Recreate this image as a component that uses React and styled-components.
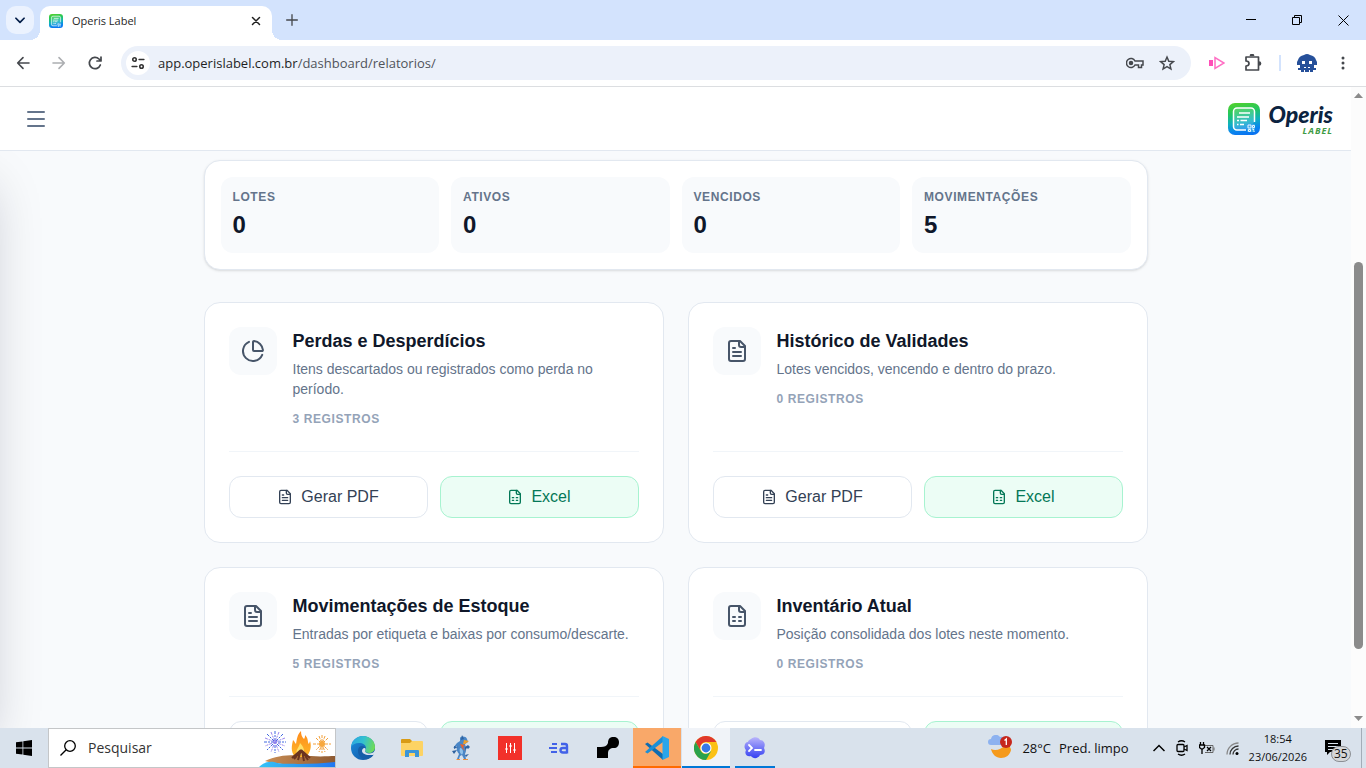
import React, { useState } from "react";
import styled, { createGlobalStyle, css } from "styled-components";
import { Menu } from "lucide-react";

const GlobalStyle = createGlobalStyle`
  * {
    box-sizing: border-box;
  }
  body {
    margin: 0;
    overflow: hidden;
    background: #f8fafc;
    font-family: "Liberation Sans", Arial, sans-serif;
  }
  button, input {
    font-family: inherit;
  }
  h1, h2, p, dl, dt, dd {
    margin: 0;
  }
`;

const stats = [
  { label: "Lotes", value: 0 },
  { label: "Ativos", value: 0 },
  { label: "Vencidos", value: 0 },
  { label: "Movimentações", value: 5 },
];

const reports = [
  {
    title: "Perdas e Desperdícios",
    text: "Itens descartados ou registrados como perda no período.",
    count: 3,
    icon: "pie",
  },
  {
    title: "Histórico de Validades",
    text: "Lotes vencidos, vencendo e dentro do prazo.",
    count: 0,
    icon: "doc",
  },
  {
    title: "Movimentações de Estoque",
    text: "Entradas por etiqueta e baixas por consumo/descarte.",
    count: 5,
    icon: "doc",
  },
  {
    title: "Inventário Atual",
    text: "Posição consolidada dos lotes neste momento.",
    count: 0,
    icon: "sheet",
  },
];

/* ---------- icons ---------- */

const Line = ({ size = 24, width = 2, children }) => (
  <svg
    width={size}
    height={size}
    viewBox="0 0 24 24"
    fill="none"
    stroke="currentColor"
    strokeWidth={width}
    strokeLinecap="round"
    strokeLinejoin="round"
    aria-hidden="true"
  >
    {children}
  </svg>
);

const FileIcon = ({ size, sheet }) => (
  <Line size={size}>
    <path d="M15 2H6a2 2 0 0 0-2 2v16a2 2 0 0 0 2 2h12a2 2 0 0 0 2-2V7Z" />
    <path d="M14 2v4a2 2 0 0 0 2 2h4" />
    {sheet ? (
      <path d="M8 13h2M14 13h2M8 17h2M14 17h2" />
    ) : (
      <path d="M10 9H8M16 13H8M16 17H8" />
    )}
  </Line>
);

const PieIcon = () => (
  <Line>
    <path d="M21 12c.55 0 1-.45.95-1a10 10 0 0 0-8.95-8.95c-.55-.05-1 .4-1 .95v8a1 1 0 0 0 1 1z" />
    <path d="M21.21 15.89A10 10 0 1 1 8 2.83" />
  </Line>
);

const AppMark = ({ size }) => (
  <svg width={size} height={size} viewBox="0 0 32 32" aria-hidden="true">
    <defs>
      <linearGradient id="mark" x1="0.3" y1="0" x2="0.5" y2="1">
        <stop offset="0" stopColor="#4fd02f" />
        <stop offset="0.3" stopColor="#22c662" />
        <stop offset="0.6" stopColor="#0fb0c0" />
        <stop offset="0.85" stopColor="#0a84ee" />
        <stop offset="1" stopColor="#0a74f0" />
      </linearGradient>
    </defs>
    <rect width="32" height="32" rx="7" fill="url(#mark)" />
    <path
      d="M18 27H9a3.500 3.500 0 0 1-3.500-3.500V8.500A3.500 3.500 0 0 1 9 5h14a3.500 3.500 0 0 1 3.500 3.500V19"
      fill="#ffffff2b"
      stroke="#fff"
      strokeWidth="1.500"
    />
    <path d="M11 10h11M9 14h12M9 17.500h2M12.500 17.500H19M9 21.500h1.500M12 21.500h4" stroke="#fff" strokeWidth="1.500" />
    <rect x="19" y="21" width="8" height="8" rx="1" fill="#3ba6ea" />
    <path d="M20 22h3v3h-3zM24.500 22.500h2v2h-2zM20.500 26.500h2v2h-2zM24 26h1.500v1.500M26.500 28.500h-1" fill="none" stroke="#e6f6ff" strokeWidth="1" />
  </svg>
);

const WindowsIcon = () => (
  <svg width="16" height="16" viewBox="0 0 16 16" aria-hidden="true">
    <path d="M0 2.300 6.500 1.400v6.200H0zM7.300 1.300 16 0v7.600H7.300zM0 8.400h6.500v6.200L0 13.700zM7.300 8.400H16V16l-8.700-1.300z" />
  </svg>
);

const CampfireIcon = () => (
  <svg width="76" height="38" viewBox="0 0 76 38" aria-hidden="true">
    <defs>
      <linearGradient id="sea" x1="0" x2="1">
        <stop offset="0" stopColor="#35c3f6" />
        <stop offset="1" stopColor="#2277f2" />
      </linearGradient>
      <linearGradient id="sand" x1="0" x2="1">
        <stop offset="0" stopColor="#c98d54" />
        <stop offset="1" stopColor="#8e5a32" />
      </linearGradient>
      <linearGradient id="fire" x1="0" y1="0" x2="0" y2="1">
        <stop offset="0" stopColor="#ff8a1c" />
        <stop offset="1" stopColor="#fdb827" />
      </linearGradient>
    </defs>
    <path d="M6 32c14-7 30-6 46-5 10 1 18 0 24 0v8c-20 3-50 2-70-3z" fill="url(#sand)" />
    <path d="M0 38c4-4 9-6 15-5 10 3 14 1 24 2 14 0 26-1 37-2v5z" fill="url(#sea)" />
    <g stroke="#4068e0" strokeWidth="1" strokeDasharray="3 1 2 1">
      <path d="M16 2v22M5 13h22M8 5l16 16M24 5 8 21" />
      <path d="M12 3l8 20M20 3l-8 20M6 9l20 8M26 9 6 17" stroke="#9a86ee" />
    </g>
    <g stroke="#f3a03a" strokeWidth="1" strokeDasharray="3 1">
      <path d="M63 6v18M54 15h18M57 9l12 12M69 9 57 21M60 7l6 16M66 7l-6 16" />
    </g>
    <circle cx="63" cy="15" r="3" fill="#f7a83f" />
    <path
      d="M36 28c-5-6-3-12-2-17 2 2 2 3 3 4 1-5 1-9 5-13 0 4 1 6 3 8 1-1 1-3 1-4 4 4 2 7 4 9 0-1 1-2 1-3 2 6 0 12-4 16z"
      fill="url(#fire)"
    />
    <path d="M38 26c-2-5 2-7 3-12 3 3 5 7 4 12z" fill="#ffe067" />
    <path d="M33 29l9-8M35 30l7-8M39 31l3-10M51 29l-9-8M49 31l-6-9M45 32l-2-10" stroke="#6b3420" strokeWidth="2" />
  </svg>
);

const EdgeIcon = () => (
  <svg width="24" height="24" viewBox="0 0 24 24" aria-hidden="true">
    <defs>
      <linearGradient id="edgeTop" x1="0" x2="1" y1="0.300" y2="0.500">
        <stop offset="0" stopColor="#2ba6e0" />
        <stop offset="0.500" stopColor="#34c1cf" />
        <stop offset="1" stopColor="#6fdc55" />
      </linearGradient>
      <linearGradient id="edgeLow" x1="0" x2="1" y1="0" y2="1">
        <stop offset="0" stopColor="#1b8fe0" />
        <stop offset="1" stopColor="#124f9c" />
      </linearGradient>
    </defs>
    <circle cx="12" cy="12" r="12" fill="url(#edgeLow)" />
    <path d="M0 11C1 4 6 0 12 0c7 0 12 5 12 11 0 4-3 6-6 6-2 0-4-1-4-2 0-.7 1-1 1-3 0-3-3-5-7-5-4 0-7 2-8 4z" fill="url(#edgeTop)" />
    <path d="M14 15c-1 0-1-1 0-2 0-2-1-3-3-3-3 0-4 3-4 5 0 5 5 9 10 8 3-1 5-3 6-5-4 2-9 0-9-3z" fill="#155ea8" />
    <path d="M14 15c0 1.500 2 2.500 4 2.500 3 0 5-1 6-3v3c-1 2-3 1.500-6 1.500-4 0-7-2-7-4 0-1.500 1-3 2.500-3 1 0 1.500 1 .5 3z" fill="#d9e2ec" />
  </svg>
);

const FolderIcon = () => (
  <svg width="22" height="20" viewBox="0 0 22 20" aria-hidden="true">
    <path d="M0 2a1 1 0 0 1 1-1h8l2 2v5H0z" fill="#d99b15" />
    <path d="M0 5h9l2-2h10a1 1 0 0 1 1 1v13a1 1 0 0 1-1 1H1a1 1 0 0 1-1-1z" fill="#fdd364" />
    <path d="M4 19v-6a1 1 0 0 1 1-1h12a1 1 0 0 1 1 1v6h-4v-4H8v4z" fill="#3b95d8" />
  </svg>
);

const MascotIcon = () => (
  <svg width="20" height="26" viewBox="0 0 20 26" aria-hidden="true">
    <path d="M9 3c1-2 6-2 7 1l1 3-3 2c1 3 2 6 0 10l1 5h-2l-2-4-2 1-1 3H6l2-5c-2-2-3-5-2-8l-4 2 4-5 3-2z" fill="#4a86c6" />
    <path d="M11 0l2 4-3 1zM1 16l5-1-3 4zM3 11l4 1-4 2zM14 20l4-1-3 3z" fill="#2e62a0" />
    <path d="M13 5l5 1-4 3h-2z" fill="#f0a02a" />
    <path d="M9 9l5 1-2 2 2 4-3-3z" fill="#e8632c" />
    <path d="M6 24h3v1H5zM12 24h5v1h-5z" fill="#f0913a" />
    <path d="M9 13c2 0 3 2 3 4s-1 3-2 2-2-4-1-6z" fill="#8fc1ea" />
    <path d="M14 12l3-2 2 2-2 2-1-1-2 2z" fill="#2e62a0" />
  </svg>
);

const MixerIcon = () => (
  <svg width="24" height="24" viewBox="0 0 24 24" aria-hidden="true">
    <rect width="24" height="24" fill="#f2312a" />
    <path d="M8.500 7v10M12.500 7v10M16.500 7v10" stroke="#fff" />
    <path d="M7.500 13h2M11.500 10h2M15.500 14h2" stroke="#fff" strokeWidth="2" />
  </svg>
);

const SpeedIcon = () => (
  <svg width="20" height="14" viewBox="0 0 20 14" fill="none" stroke="#4262e8" aria-hidden="true">
    <path d="M3 3h5M0 7h8M2 11h6" strokeWidth="2" />
    <path d="M12 3h4q2 0 2 2v7.500M18 7h-4q-2.500 0-2.500 2.200T14 11.500h4" strokeWidth="2.400" />
  </svg>
);

const JointIcon = () => (
  <svg width="22" height="22" viewBox="0 0 22 22" aria-hidden="true">
    <path d="M0 10h4c3 0 6-1 7-4C11 2 13 0 16 0a5 5 0 0 1 6 5c0 4-2 6-5 6-4 0-6 2-6 5v5H0z" />
  </svg>
);

const CodeIcon = () => (
  <svg width="24" height="24" viewBox="0 0 24 24" aria-hidden="true">
    <path d="M0 8l2.500-1.500L18 18v6z" fill="#0f6cb0" />
    <path d="M0 16l2.500 1.500L18 6V0z" fill="#1c8fd6" />
    <path d="M17.500 0l6.500 3v18l-6.500 3z" fill="#2aa5ea" />
  </svg>
);

const ChromeIcon = () => (
  <svg width="24" height="24" viewBox="0 0 24 24" aria-hidden="true">
    <circle cx="12" cy="12" r="12" fill="#fbc116" />
    <path d="M1.600 6A12 12 0 0 1 22.400 6H12a6 6 0 0 0-5.200 9z" fill="#e0382c" />
    <path d="M1.600 6l5.200 9A6 6 0 0 0 12 18l5.200-3L12 24A12 12 0 0 1 1.600 6z" fill="#2ba24c" />
    <circle cx="12" cy="12" r="5.500" fill="#fff" />
    <circle cx="12" cy="12" r="4.400" fill="#3778e6" />
  </svg>
);

const ShellIcon = () => (
  <svg width="22" height="22" viewBox="0 0 22 22" aria-hidden="true">
    <defs>
      <linearGradient id="shell" x1="0" y1="0" x2="0" y2="1">
        <stop offset="0" stopColor="#b9b4fb" />
        <stop offset="1" stopColor="#3440f2" />
      </linearGradient>
    </defs>
    <g fill="url(#shell)">
      <path d="M7 2c3-3 8-2 9 1 4 0 6 4 4 8 2 4 0 7-4 7-2 4-7 4-9 1-4 1-7-2-5-6-3-3-1-8 2-8 0-1 1-2 3-3z" />
    </g>
    <path d="M5 8l3 3-3 3M11 13h6" fill="none" stroke="#fff" strokeWidth="1.800" strokeLinecap="round" />
  </svg>
);

const WeatherIcon = () => (
  <svg width="26" height="26" viewBox="0 0 26 26" aria-hidden="true">
    <path d="M3 14c4 2 10 1 14-4 3 0 6 2 6 5-1 5-5 8-10 8s-9-4-10-9z" fill="#f59a1c" />
    <path d="M3 10a3 3 0 0 1 0-6 5 5 0 0 1 9-2 4 4 0 0 1 3 8z" fill="#8db2f0" />
    <circle cx="18" cy="7" r="6" fill="#c6271c" />
    <path d="M16.500 5.500 18.300 4v6" fill="none" stroke="#fff" strokeWidth="1.300" />
  </svg>
);

const ProfileIcon = () => (
  <svg width="20" height="18" viewBox="0 0 20 18" aria-hidden="true">
    <path d="M7 1q3-2 6 0 5 1 6 5l1 2v3h-3v3h2v2h-3v2h-3v-2h-1v2h-4v-2H7v2H4v-2H1v-2h2v-3H0V8l1-2q1-4 6-5z" fill="#26509a" />
    <path d="M5 7h3v3H5zM12 7h3v3h-3zM7 13h2v1H7zM11 13h2v1h-2z" fill="#fff" />
  </svg>
);

/* ---------- page ---------- */

function App() {
  const [search, setSearch] = useState("");

  return (
    <Screen>
      <GlobalStyle />
      <TabStrip>
        <TabSearch aria-label="Pesquisar guias">
          <Line size={14} width={3}>
            <path d="M5 9l7 7 7-7" />
          </Line>
        </TabSearch>
        <Tab>
          <AppMark size={14} />
          <TabTitle>Operis Label</TabTitle>
          <PlainButton $size={20} aria-label="Fechar guia">
            <Line size={12} width={3}>
              <path d="M5 5l14 14M19 5 5 19" />
            </Line>
          </PlainButton>
        </Tab>
        <PlainButton $size={40} $color="#45484d" aria-label="Nova guia">
          <Line size={16}>
            <path d="M12 4v16M4 12h16" />
          </Line>
        </PlainButton>
        <WindowControls>
          <WindowButton aria-label="Minimizar">
            <svg width="10" height="10" stroke="#000"><path d="M0 4.500h10" /></svg>
          </WindowButton>
          <WindowButton aria-label="Restaurar">
            <svg width="10" height="10" fill="none" stroke="#000"><path d="M.5 2.500h7v7h-7zM2.500 2.500v-2h7v7h-2" /></svg>
          </WindowButton>
          <WindowButton aria-label="Fechar">
            <svg width="11" height="11" stroke="#000"><path d="M.5.5l10 10M10.500.5l-10 10" /></svg>
          </WindowButton>
        </WindowControls>
      </TabStrip>

      <Toolbar>
        <PlainButton $size={36} $color="#45484d" aria-label="Voltar">
          <Line size={16} width={2.400}><path d="M21 12H4M12 4l-8 8 8 8" /></Line>
        </PlainButton>
        <PlainButton $size={36} $color="#acaeb1" aria-label="Avançar">
          <Line size={16} width={2.400}><path d="M3 12h17M12 4l8 8-8 8" /></Line>
        </PlainButton>
        <PlainButton $size={36} $color="#45484d" aria-label="Recarregar">
          <Line size={16} width={2.600}><path d="M20 15A8.500 8.500 0 1 1 18 6l2.500 2.500M21 3v6h-6" /></Line>
        </PlainButton>
        <AddressBar>
          <SiteInfo aria-label="Informações do site">
            <Line size={14} width={2.800}>
              <circle cx="6" cy="6" r="3" />
              <path d="M14 6h8M2 18h8" />
              <circle cx="18" cy="18" r="3" />
            </Line>
          </SiteInfo>
          <Url>
            <b>app.operislabel.com.br</b>/dashboard/relatorios/
          </Url>
          <PlainButton $size={32} $color="#45484d" aria-label="Senhas">
            <svg width="18" height="12" viewBox="0 0 18 12" fill="none" stroke="currentColor" strokeWidth="1.500">
              <path d="M9 4A4.500 4.500 0 1 0 9 8h3.500v2.500h3V8H17V4z" />
              <circle cx="5" cy="6" r="1.500" fill="currentColor" />
            </svg>
          </PlainButton>
          <PlainButton $size={32} $color="#45484d" aria-label="Favoritar">
            <svg width="16" height="16" viewBox="0 0 24 24" fill="none" stroke="currentColor" strokeWidth="2.200">
              <path d="M12 3l2.700 6.300 6.800.6-5.200 4.500 1.600 6.700-5.900-3.600-5.900 3.600 1.600-6.700-5.200-4.500 6.800-.6z" />
            </svg>
          </PlainButton>
        </AddressBar>
        <Extensions>
          <PlainButton $size={36} aria-label="Extensão de gravação">
            <svg width="16" height="14" viewBox="0 0 16 14">
              <path d="M0 4h4v6H0z" fill="#ff4fb8" />
              <path d="M6 1.500v11L15 7z" fill="none" stroke="#ff6fc4" strokeWidth="1.500" />
            </svg>
          </PlainButton>
          <PlainButton $size={36} $color="#45484d" aria-label="Extensões">
            <svg width="18" height="18" viewBox="0 0 18 18" fill="none" stroke="currentColor" strokeWidth="1.700">
              <path d="M2 3h12.500v13H2v-4q3 0 3-2.500T2 7z" strokeLinejoin="round" />
              <path d="M6.500 2q0-1.500 1.500-1.500T9.500 2M15 8q1.500 0 1.500 1.500T15 11" fill="currentColor" />
            </svg>
          </PlainButton>
          <Separator />
          <PlainButton $size={36} aria-label="Perfil">
            <ProfileIcon />
          </PlainButton>
          <PlainButton $size={36} $color="#45484d" aria-label="Mais opções">
            <svg width="4" height="14" fill="currentColor">
              <circle cx="2" cy="2" r="1.500" /><circle cx="2" cy="7" r="1.500" /><circle cx="2" cy="12" r="1.500" />
            </svg>
          </PlainButton>
        </Extensions>
      </Toolbar>

      <Viewport>
        <Site>
          <Header>
            <PlainButton $size={24} $color="#64748b" aria-label="Abrir menu">
              <Menu size={24} />
            </PlainButton>
            <Brand href="#">
              <AppMark size={32} />
              <BrandText>
                <BrandName>Operis</BrandName>
                <BrandTag>LABEL</BrandTag>
              </BrandText>
            </Brand>
          </Header>
          <Main>
            <Drawer />
            <Content>
              <StatsCard>
                {stats.map((item) => (
                  <Stat key={item.label}>
                    <dt>{item.label}</dt>
                    <dd>{item.value}</dd>
                  </Stat>
                ))}
              </StatsCard>
              <ReportGrid>
                {reports.map((report) => (
                  <Report key={report.title} {...report} />
                ))}
              </ReportGrid>
            </Content>
          </Main>
        </Site>
        <Scrollbar>
          <svg width="9" height="5" fill="#8b8b8b"><path d="M0 5 4.500 0 9 5z" /></svg>
          <Track>
            <Thumb />
          </Track>
          <svg width="9" height="5" fill="#8b8b8b"><path d="M0 0h9L4.500 5z" /></svg>
        </Scrollbar>
      </Viewport>

      <Taskbar>
        <StartButton aria-label="Iniciar">
          <WindowsIcon />
        </StartButton>
        <SearchBox>
          <svg width="16" height="16" viewBox="0 0 16 16" fill="none" stroke="#000" strokeWidth="1.300">
            <circle cx="10" cy="6" r="5.300" />
            <path d="M6.200 9.800.5 15.500" />
          </svg>
          <input
            aria-label="Pesquisar"
            placeholder="Pesquisar"
            value={search}
            onChange={(e) => setSearch(e.target.value)}
          />
          <CampfireIcon />
        </SearchBox>
        <Apps>
          <TaskButton aria-label="Edge"><EdgeIcon /></TaskButton>
          <TaskButton aria-label="Arquivos"><FolderIcon /></TaskButton>
          <TaskButton aria-label="Mascote"><MascotIcon /></TaskButton>
          <TaskButton aria-label="Mixer"><MixerIcon /></TaskButton>
          <TaskButton aria-label="EA"><SpeedIcon /></TaskButton>
          <TaskButton aria-label="Conector"><JointIcon /></TaskButton>
          <TaskButton $bg="#f9a869" $line="#ff6a00" aria-label="Editor"><CodeIcon /></TaskButton>
          <TaskButton $bg="#f0f3f8" $line="#0078d7" aria-label="Chrome"><ChromeIcon /></TaskButton>
          <TaskButton $line="#0078d7" $inset aria-label="Terminal"><ShellIcon /></TaskButton>
        </Apps>
        <Tray>
          <Weather>
            <WeatherIcon />
            <span>28°C</span>
            <span>Pred. limpo</span>
          </Weather>
          <TrayIcons>
            <svg width="12" height="8" fill="none" stroke="#000" strokeWidth="1.500"><path d="M.5 7 6 1.500 11.500 7" /></svg>
            <svg width="12" height="16" fill="none" stroke="#000" strokeWidth="1.300">
              <path d="M2 2Q5.500-.5 9 2M2 14q3.500 2.500 7 0" />
              <rect x="1" y="4.500" width="7" height="7" rx="1" />
              <path d="M8 7l3-1.500v5L8 9" />
            </svg>
            <svg width="16" height="14" fill="none" stroke="#000">
              <path d="M4.500 4.500H14v7H6M15 6.500v3" stroke="#666" />
              <path d="M1.500 1v3M4.500 1v3M.5 4h5v2.500l-2.500 2-2.500-2zM3 8.500V13M8 6l4 4M12 6l-4 4" strokeWidth="1.300" />
            </svg>
            <svg width="13" height="13" fill="none" stroke="#333" strokeWidth="1.300">
              <path d="M1 12.500A11.500 11.500 0 0 1 12.500 1" stroke="#888" />
              <path d="M4 12.500A8.500 8.500 0 0 1 12.500 4M7 12.500A5.500 5.500 0 0 1 12.500 7" />
              <circle cx="11" cy="11.500" r="1.500" fill="#000" stroke="none" />
            </svg>
          </TrayIcons>
          <Clock>
            <span>18:54</span>
            <span>23/06/2026</span>
          </Clock>
          <Notices aria-label="35 notificações">
            <svg width="16" height="16" viewBox="0 0 16 16">
              <path d="M0 0h16v12H5l-3 3v-3H0z" />
              <path d="M3 3.500h10M3 6.500h10M3 9.500h6" stroke="#dbe4ed" />
            </svg>
            <NoticeCount>35</NoticeCount>
          </Notices>
          <ShowDesktop aria-label="Mostrar área de trabalho" />
        </Tray>
      </Taskbar>
    </Screen>
  );
}

const Report = ({ title, text, count, icon }) => (
  <ReportCard>
    <ReportTop>
      <IconBox>
        {icon === "pie" ? <PieIcon /> : <FileIcon size={24} sheet={icon === "sheet"} />}
      </IconBox>
      <ReportText>
        <h2>{title}</h2>
        <p>{text}</p>
        <Count>{count} registros</Count>
      </ReportText>
    </ReportTop>
    <Actions>
      <ActionButton>
        <FileIcon size={16} />
        Gerar PDF
      </ActionButton>
      <ActionButton $excel>
        <FileIcon size={16} sheet />
        Excel
      </ActionButton>
    </Actions>
  </ReportCard>
);

export default App;

/* ---------- browser ---------- */

const Screen = styled.div`
  height: 100vh;
  display: flex;
  flex-direction: column;
`;

const PlainButton = styled.button`
  width: ${(p) => p.$size}px;
  height: ${(p) => p.$size}px;
  flex: none;
  display: flex;
  align-items: center;
  justify-content: center;
  padding: 0;
  border: 0;
  background: none;
  color: ${(p) => p.$color || "#1f1f1f"};
`;

const TabStrip = styled.div`
  height: 40px;
  flex: none;
  display: flex;
  align-items: center;
  padding-left: 6px;
  background: #d3e3fd;
`;

const TabSearch = styled.button`
  width: 28px;
  height: 28px;
  display: flex;
  align-items: center;
  justify-content: center;
  padding: 0;
  border: 0;
  border-radius: 10px;
  background: #ebf2fe;
  color: #041e49;
`;

const Tab = styled.div`
  position: relative;
  width: 232px;
  height: 34px;
  align-self: flex-end;
  display: flex;
  align-items: center;
  gap: 9px;
  margin-left: 6px;
  padding: 0 6px 5px 9px;
  border-radius: 10px 10px 0 0;
  background: #fff;

  &::before,
  &::after {
    content: "";
    position: absolute;
    bottom: 0;
    width: 10px;
    height: 10px;
  }
  &::before {
    right: 100%;
    background: radial-gradient(circle at 0 0, transparent 10px, #fff 10px);
  }
  &::after {
    left: 100%;
    background: radial-gradient(circle at 100% 0, transparent 10px, #fff 10px);
  }
`;

const TabTitle = styled.span`
  flex: 1;
  font: 11px/16px "Open Sans", sans-serif;
  color: #1f1f1f;
`;

const WindowControls = styled.div`
  height: 100%;
  display: flex;
  margin-left: auto;
`;

const WindowButton = styled.button`
  width: 46px;
  display: flex;
  align-items: center;
  justify-content: center;
  padding: 0;
  border: 0;
  background: none;
`;

const Toolbar = styled.div`
  height: 47px;
  flex: none;
  display: flex;
  align-items: center;
  padding: 0 5px;
  border-bottom: 1px solid #dcdee1;
  background: #fff;
`;

const AddressBar = styled.div`
  flex: 1;
  height: 34px;
  display: flex;
  align-items: center;
  margin-left: 8px;
  padding: 0 8px 0 5px;
  border-radius: 17px;
  background: #ecf1fa;
`;

const SiteInfo = styled.button`
  width: 24px;
  height: 24px;
  display: flex;
  align-items: center;
  justify-content: center;
  padding: 0;
  border: 0;
  border-radius: 50%;
  background: #fff;
  color: #333;
`;

const Url = styled.span`
  flex: 1;
  margin-left: 8px;
  font: 13px/18px "Open Sans", sans-serif;
  color: #50545a;

  b {
    font-weight: 400;
    color: #1f1f1f;
  }
`;

const Extensions = styled.div`
  display: flex;
  align-items: center;
  margin-left: 8px;
`;

const Separator = styled.span`
  width: 2px;
  height: 16px;
  margin: 0 8px;
  background: #d3e3fd;
`;

const Viewport = styled.div`
  flex: 1;
  min-height: 0;
  display: flex;
`;

const Scrollbar = styled.div`
  width: 15px;
  flex: none;
  display: flex;
  flex-direction: column;
  align-items: center;
  padding: 6px 0 7px;
  background: #fcfcfc;
`;

const Track = styled.div`
  flex: 1;
  width: 9px;
  padding-top: 164px;
`;

const Thumb = styled.div`
  height: 387px;
  border-radius: 5px;
  background: #8b8b8b;
`;

/* ---------- site ---------- */

const Site = styled.div`
  flex: 1;
  min-width: 0;
  display: flex;
  flex-direction: column;
`;

const Header = styled.header`
  height: 64px;
  flex: none;
  display: flex;
  align-items: center;
  justify-content: space-between;
  padding: 0 18px 0 24px;
  border-bottom: 1px solid #e2e8f0;
  background: #fff;
`;

const Brand = styled.a`
  display: flex;
  align-items: center;
  gap: 9px;
  text-decoration: none;
`;

const BrandText = styled.span`
  display: flex;
  flex-direction: column;
  font-style: italic;
`;

const BrandName = styled.span`
  font-family: Lato, sans-serif;
  font-size: 23px;
  line-height: 23px;
  font-weight: 900;
  color: #0b2340;
`;

const BrandTag = styled.span`
  align-self: flex-end;
  font-family: "Open Sans", sans-serif;
  font-size: 9px;
  line-height: 9px;
  font-weight: 700;
  letter-spacing: 1px;
  color: #3f9b45;
`;

const Main = styled.main`
  position: relative;
  flex: 1;
  min-height: 0;
  overflow: hidden;
  padding: 9px 24px 0;
`;

/* closed menu, only its shadow shows at the edge */
const Drawer = styled.aside`
  position: absolute;
  top: 0;
  bottom: 0;
  right: 100%;
  width: 256px;
  background: #fff;
  box-shadow: 0 25px 50px -12px rgba(15, 15, 40, 0.22);
`;

const Content = styled.div`
  max-width: 944px;
  margin: 0 auto;
  display: flex;
  flex-direction: column;
  gap: 32px;
`;

const StatsCard = styled.dl`
  display: grid;
  grid-template-columns: repeat(4, 1fr);
  gap: 12px;
  padding: 16px;
  border: 1px solid #e2e8f0;
  border-radius: 16px;
  background: #fff;
  box-shadow: 0 1px 3px rgba(0, 0, 0, 0.1), 0 1px 2px -1px rgba(0, 0, 0, 0.1);
`;

const capsLabel = css`
  font-size: 12px;
  line-height: 16px;
  font-weight: 700;
  letter-spacing: 0.05em;
  text-transform: uppercase;
`;

const Stat = styled.div`
  padding: 12px;
  border-radius: 12px;
  background: #f8fafc;

  dt {
    ${capsLabel}
    color: #64748b;
  }
  dd {
    margin-top: 4px;
    font-size: 24px;
    line-height: 32px;
    font-weight: 700;
    color: #0f172a;
  }
`;

const ReportGrid = styled.div`
  display: grid;
  grid-template-columns: 1fr 1fr;
  gap: 24px;
`;

const ReportCard = styled.section`
  display: flex;
  flex-direction: column;
  justify-content: space-between;
  gap: 24px;
  padding: 24px;
  border: 1px solid #e2e8f0;
  border-radius: 16px;
  background: #fff;
`;

const ReportTop = styled.div`
  display: flex;
  align-items: flex-start;
  gap: 16px;
`;

const IconBox = styled.div`
  width: 48px;
  height: 48px;
  flex: none;
  display: flex;
  align-items: center;
  justify-content: center;
  border-radius: 12px;
  background: #f8fafc;
  color: #475569;
`;

const ReportText = styled.div`
  h2 {
    font-size: 18px;
    line-height: 28px;
    color: #0f172a;
  }
  p {
    margin-top: 4px;
    font-size: 14px;
    line-height: 20px;
    color: #64748b;
  }
`;

const Count = styled.div`
  ${capsLabel}
  margin-top: 12px;
  color: #94a3b8;
`;

const Actions = styled.div`
  display: grid;
  grid-template-columns: 1fr 1fr;
  gap: 12px;
  padding-top: 24px;
  border-top: 1px solid #f1f5f9;
`;

const ActionButton = styled.button`
  display: flex;
  align-items: center;
  justify-content: center;
  gap: 8px;
  padding: 8px 16px;
  border: 1px solid ${(p) => (p.$excel ? "#a7f3d0" : "#e2e8f0")};
  border-radius: 12px;
  background: ${(p) => (p.$excel ? "#ecfdf5" : "#fff")};
  color: ${(p) => (p.$excel ? "#047857" : "#334155")};
  font-size: 16px;
  line-height: 24px;
`;

/* ---------- taskbar ---------- */

const Taskbar = styled.footer`
  position: relative;
  height: 40px;
  flex: none;
  display: flex;
  background: #d9e2ec;
  font-family: "Open Sans", sans-serif;
  color: #111;
`;

const StartButton = styled.button`
  width: 48px;
  display: flex;
  align-items: center;
  justify-content: center;
  padding: 0;
  border: 0;
  background: none;
`;

const SearchBox = styled.div`
  width: 288px;
  display: flex;
  align-items: center;
  padding-left: 11px;
  border: 1px solid #c4c6c8;
  background: #fff;

  input {
    flex: 1;
    min-width: 0;
    padding: 0 0 0 12px;
    border: 0;
    outline: 0;
    background: none;
    font-size: 14px;
    line-height: 20px;
  }
  input::placeholder {
    color: #333;
  }
`;

const Apps = styled.div`
  display: flex;
  gap: 1px;
  margin-left: 3px;
`;

const TaskButton = styled.button`
  position: relative;
  width: 48px;
  display: flex;
  align-items: center;
  justify-content: center;
  padding: 0;
  border: 0;
  background: ${(p) => p.$bg || "none"};

  &::after {
    content: "";
    position: absolute;
    bottom: 0;
    left: ${(p) => (p.$inset ? 4 : 0)}px;
    right: ${(p) => (p.$inset ? 4 : 0)}px;
    height: 2px;
    background: ${(p) => p.$line || "none"};
  }
`;

const Tray = styled.div`
  display: flex;
  align-items: center;
  margin-left: auto;
`;

const Weather = styled.div`
  display: flex;
  align-items: center;
  gap: 8px;
  margin-right: 24px;
  font-size: 13px;
  line-height: 20px;
`;

const TrayIcons = styled.div`
  display: flex;
  align-items: center;
  gap: 11px;
  margin-right: 10px;
`;

const Clock = styled.div`
  display: flex;
  flex-direction: column;
  align-items: center;
  font-size: 11px;
  line-height: 18px;
`;

const Notices = styled.button`
  position: relative;
  display: flex;
  margin: 0 20px 0 18px;
  padding: 0;
  border: 0;
  background: none;
`;

const NoticeCount = styled.span`
  position: absolute;
  left: 6px;
  top: 6px;
  padding: 0 2px;
  border: 1px solid #8b8f94;
  border-radius: 9px;
  background: #d4d6d8;
  font: 12px/14px "Open Sans", sans-serif;
  color: #111;
`;

const ShowDesktop = styled.button`
  width: 5px;
  height: 40px;
  padding: 0;
  border: 0;
  border-left: 1px solid #a3adb8;
  background: none;
`;
